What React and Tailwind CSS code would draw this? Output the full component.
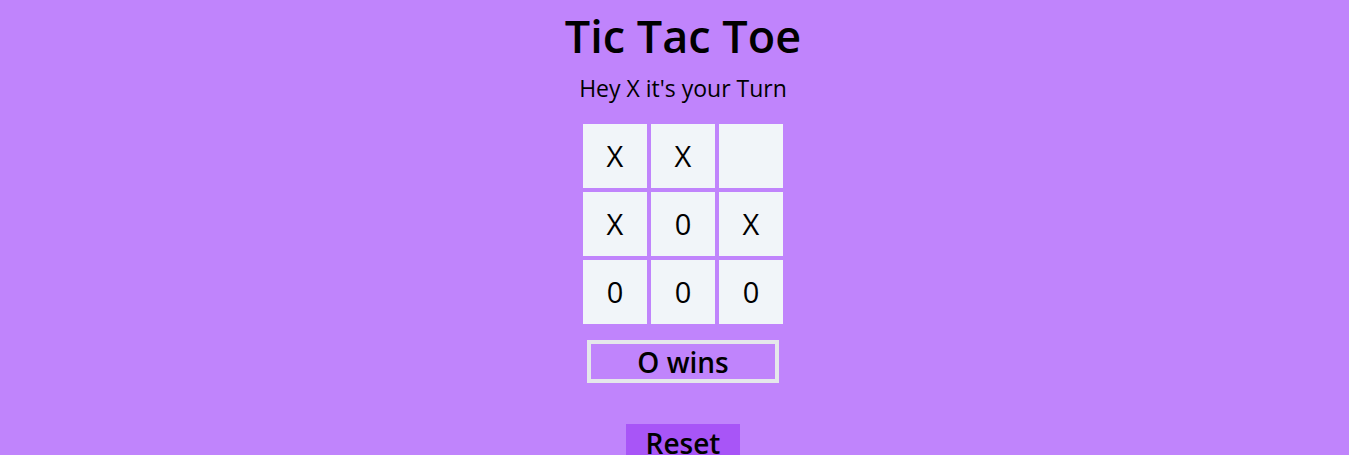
import React from "react";

const board = ["X", "X", "", "X", "0", "X", "0", "0", "0"];

export default function App() {
  return (
    <div
      className="h-[455px] bg-[#c084fc] flex flex-col items-center pl-[17px] text-black"
      style={{ fontFamily: '"Open Sans", "Noto Sans", sans-serif' }}
    >
      <h1 className="mt-[8px] text-[45px] leading-[56px] font-semibold">Tic Tac Toe</h1>
      <p className="mt-[10px] text-[23px] leading-[28px]">Hey X it's your Turn</p>
      <div className="mt-[22px] grid grid-cols-[64px_64px_64px] gap-[4px]">
        {board.map((v, i) => (
          <div
            key={i}
            className="w-16 h-16 bg-[#f1f5f9] flex items-center justify-center text-[29px]"
          >
            {v}
          </div>
        ))}
      </div>
      <div className="mt-[16px] w-[192px] h-[43px] border-4 border-[#e5e7eb] flex items-center justify-center text-[28px] font-semibold">
        O wins
      </div>
      <button className="mt-[41px] w-[114px] h-[44px] shrink-0 bg-[#a855f7] flex items-start justify-center text-[28px] font-semibold leading-[38px]">
        Reset
      </button>
    </div>
  );
}
